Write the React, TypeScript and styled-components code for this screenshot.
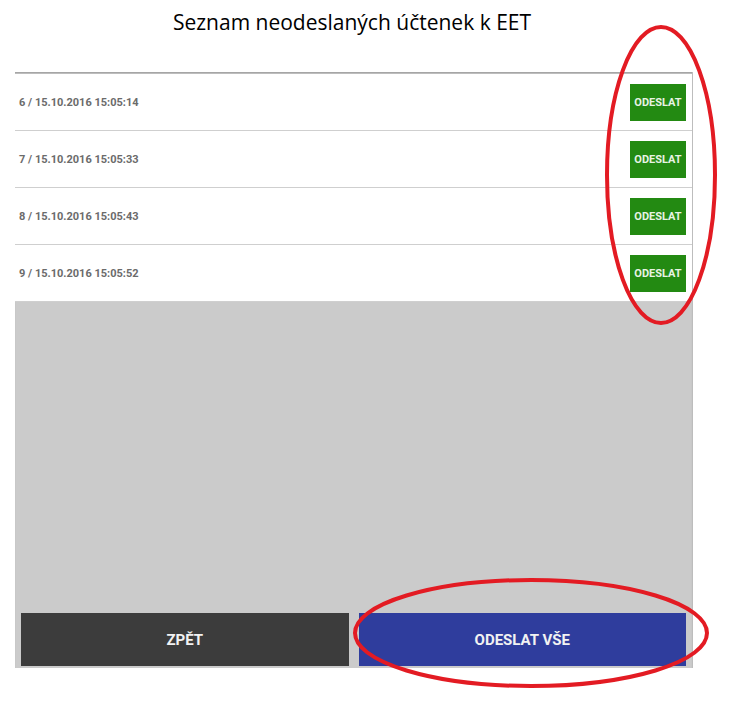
import styled, {createGlobalStyle} from "styled-components";

const GlobalStyle = createGlobalStyle`
    body {
        margin: 0;
        background: #fff;
        font-family: Roboto, "Liberation Sans", sans-serif;
    }
`

const receipts = [
    {id: 6, date: "15.10.2016 15:05:14"},
    {id: 7, date: "15.10.2016 15:05:33"},
    {id: 8, date: "15.10.2016 15:05:43"},
    {id: 9, date: "15.10.2016 15:05:52"},
];

export default function App() {
    return (
        <Page>
            <GlobalStyle/>
            <Title>Seznam neodeslaných účtenek k EET</Title>
            <Panel>
                <List>
                    {receipts.map(r => (
                        <Row key={r.id}>
                            <RowText>{r.id} / {r.date}</RowText>
                            <SendButton>ODESLAT</SendButton>
                        </Row>
                    ))}
                </List>
                <Footer>
                    <FooterButton $color="#3c3c3c">ZPĚT</FooterButton>
                    <FooterButton $color="#2f3d9d">ODESLAT VŠE</FooterButton>
                </Footer>
            </Panel>
            <Marks width="732" height="709" viewBox="0 0 732 709">
                <ellipse cx="661" cy="175" rx="54" ry="148" fill="none" stroke="#e31b23" strokeWidth="4"/>
                <ellipse cx="531" cy="633" rx="176" ry="53" fill="none" stroke="#e31b23" strokeWidth="4"/>
            </Marks>
        </Page>
    );
}

const Page = styled.div`
    position: relative;
    width: 732px;
    height: 709px;
    padding-top: 7px;
    box-sizing: border-box;
`

const Title = styled.h1`
    margin: 0 0 35px;
    padding-right: 28px;
    text-align: center;
    font-family: "Open Sans", sans-serif;
    font-weight: 400;
    font-size: 21px;
    line-height: 30px;
    color: #000;
`

const Panel = styled.div`
    margin-left: 15px;
    width: 678px;
    height: 596px;
    background: #cbcbcb;
    border-right: 1px solid #bdbdbd;
    box-sizing: border-box;
    box-shadow: inset 0 2px 2px -1px #9a9a9a;
    display: flex;
    flex-direction: column;
    justify-content: space-between;
`

const List = styled.div`
    display: flex;
    flex-direction: column;
    padding-top: 2px;
`

const Row = styled.div`
    height: 56px;
    background: #fff;
    border-bottom: 1px solid #cfcfcf;
    display: flex;
    align-items: center;
    justify-content: space-between;
    padding: 0 6px 0 4px;
`

const RowText = styled.span`
    font-size: 11px;
    font-weight: 700;
    color: #6b6b6b;
`

const SendButton = styled.button`
    width: 56px;
    height: 37px;
    border: none;
    padding: 0;
    background: #238a12;
    color: #e8f3e4;
    font-family: Roboto, sans-serif;
    font-size: 11px;
    font-weight: 700;
`

const Footer = styled.div`
    display: flex;
    gap: 10px;
    padding: 0 6px 2px 6px;
`

const FooterButton = styled.button<{ $color: string }>`
    flex: 1;
    height: 53px;
    border: none;
    background: ${p => p.$color};
    color: #f2f2f2;
    font-family: Roboto, sans-serif;
    font-size: 15px;
    font-weight: 700;
`

const Marks = styled.svg`
    position: absolute;
    left: 0;
    top: 0;
    pointer-events: none;
`
